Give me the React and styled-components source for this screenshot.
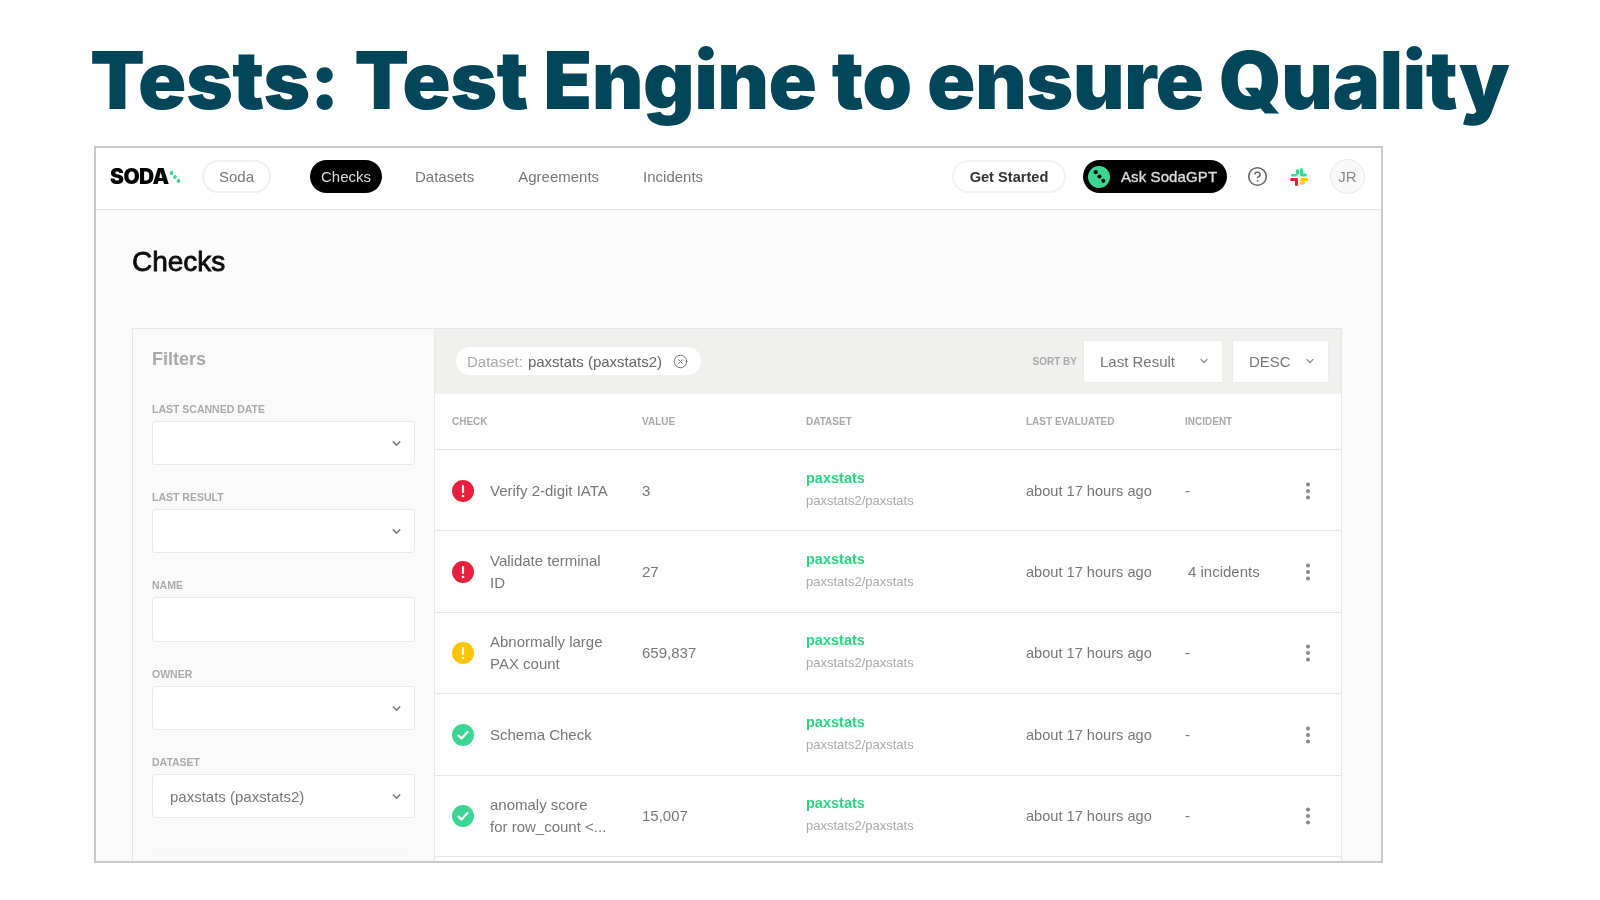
import React from "react";
import styled, { createGlobalStyle } from "styled-components";
import { ChevronDown, CircleHelp, CircleX, EllipsisVertical } from "lucide-react";

const rows = [
  { status: "fail", name: "Verify 2-digit IATA", value: "3", incident: "-" },
  { status: "fail", name: "Validate terminal ID", value: "27", incident: "4 incidents" },
  { status: "warn", name: "Abnormally large PAX count", value: "659,837", incident: "-" },
  { status: "pass", name: "Schema Check", value: "", incident: "-" },
  { status: "pass", name: "anomaly score for row_count <...", value: "15,007", incident: "-" },
];

const statusColors = { fail: "#e8203e", warn: "#fdc500", pass: "#3cd692" };

function StatusIcon({ status }) {
  return (
    <svg width="22" height="22" viewBox="0 0 22 22">
      <circle cx="11" cy="11" r="11" fill={statusColors[status]} />
      {status === "pass" ? (
        <path d="M6.5 11.5l3 3 6-6.5" fill="none" stroke="#fff" strokeWidth="2.2" strokeLinecap="round" strokeLinejoin="round" />
      ) : (
        <>
          <rect x="9.9" y="5" width="2.2" height="8" rx="1" fill="#fff" />
          <circle cx="11" cy="16" r="1.3" fill="#fff" />
        </>
      )}
    </svg>
  );
}

function SlackLogo() {
  return (
    <svg width="20" height="20" viewBox="0 0 20 20">
      <rect x="7" y="2" width="3" height="6" rx="1.5" fill="#3cd692" />
      <rect x="2" y="7" width="6" height="2.6" rx="1.3" fill="#3cd692" />
      <rect x="11" y="1" width="3" height="8" rx="1.5" fill="#3cd692" />
      <rect x="11" y="6.5" width="7" height="3" rx="1.5" fill="#3cd692" />
      <rect x="1" y="11" width="8" height="3" rx="1.5" fill="#e8203e" />
      <rect x="6" y="11" width="3" height="8" rx="1.5" fill="#e8203e" />
      <rect x="11" y="11" width="8" height="3" rx="1.5" fill="#fdc500" />
      <rect x="11" y="14.5" width="5" height="3" rx="1.5" fill="#fdc500" />
    </svg>
  );
}

function SodaDots({ size = 12, color = "#3cd692" }) {
  return (
    <svg width={size} height={size} viewBox="0 0 12 12">
      <circle cx="2.5" cy="2" r="1.9" fill={color} />
      <circle cx="6" cy="6" r="1.9" fill={color} />
      <circle cx="9.5" cy="10" r="1.9" fill={color} />
    </svg>
  );
}

function SelectField({ label, value }) {
  return (
    <Field>
      <FieldLabel>{label}</FieldLabel>
      <SelectBox>
        <span>{value}</span>
        <ChevronDown size={13} strokeWidth={2.8} color="#808080" />
      </SelectBox>
    </Field>
  );
}

export default function App() {
  return (
    <>
      <GlobalStyle />
      <Slide>
        <Title>Tests: Test Engine to ensure Quality</Title>
        <Frame>
          <Nav>
            <Logo>
              SODA
              <SodaDots />
            </Logo>
            <OutlinePill>Soda</OutlinePill>
            <NavLinks>
              <ActiveLink>Checks</ActiveLink>
              <NavLink>Datasets</NavLink>
              <NavLink>Agreements</NavLink>
              <NavLink>Incidents</NavLink>
            </NavLinks>
            <NavRight>
              <StartedPill>Get Started</StartedPill>
              <AskPill>
                <AskDot>
                  <SodaDots size={13} color="#000" />
                </AskDot>
                Ask SodaGPT
              </AskPill>
              <CircleHelp size={21} strokeWidth={1.8} color="#666" />
              <SlackSlot>
                <SlackLogo />
              </SlackSlot>
              <Avatar>JR</Avatar>
            </NavRight>
          </Nav>
          <Main>
            <Heading>Checks</Heading>
            <Panel>
              <Filters>
                <FiltersTitle>Filters</FiltersTitle>
                <SelectField label="Last scanned date" />
                <SelectField label="Last result" />
                <Field>
                  <FieldLabel>Name</FieldLabel>
                  <NameInput />
                </Field>
                <SelectField label="Owner" />
                <SelectField label="Dataset" value="paxstats (paxstats2)" />
                <FadedField />
              </Filters>
              <Results>
                <Toolbar>
                  <Chip>
                    <ChipKey>Dataset:</ChipKey>
                    <span>paxstats (paxstats2)</span>
                    <CircleX size={15} strokeWidth={1.6} color="#777" />
                  </Chip>
                  <SortGroup>
                    <SortLabel>SORT BY</SortLabel>
                    <SortSelect $width={140}>
                      Last Result
                      <ChevronDown size={12} strokeWidth={2.4} color="#8d8d8d" />
                    </SortSelect>
                    <SortSelect $width={97}>
                      DESC
                      <ChevronDown size={12} strokeWidth={2.4} color="#8d8d8d" />
                    </SortSelect>
                  </SortGroup>
                </Toolbar>
                <TableHead>
                  <HeadCell>Check</HeadCell>
                  <HeadCell>Value</HeadCell>
                  <HeadCell>Dataset</HeadCell>
                  <HeadCell>Last evaluated</HeadCell>
                  <HeadCell>Incident</HeadCell>
                </TableHead>
                {rows.map((row) => (
                  <Row key={row.name}>
                    <CheckCell>
                      <StatusIcon status={row.status} />
                      <CheckName>{row.name}</CheckName>
                    </CheckCell>
                    <span>{row.value}</span>
                    <DatasetCell>
                      <DatasetName>paxstats</DatasetName>
                      <DatasetPath>paxstats2/paxstats</DatasetPath>
                    </DatasetCell>
                    <EvaluatedCell>about 17 hours ago</EvaluatedCell>
                    <IncidentCell $dash={row.incident === "-"}>{row.incident}</IncidentCell>
                    <EllipsisVertical size={22} strokeWidth={2.4} color="#888" />
                  </Row>
                ))}
              </Results>
            </Panel>
          </Main>
        </Frame>
      </Slide>
    </>
  );
}

const GlobalStyle = createGlobalStyle`
  body {
    margin: 0;
    background: #fff;
    font-family: "Liberation Sans", Arial, sans-serif;
  }
`;

const Slide = styled.div`
  width: 1600px;
  height: 900px;
  overflow: hidden;
  display: flex;
  flex-direction: column;
`;

const Title = styled.h1`
  height: 146px;
  margin: 0;
  padding: 30px 0 0 90px;
  box-sizing: border-box;
  font-family: Inter, sans-serif;
  font-size: 80px;
  font-weight: 900;
  letter-spacing: -0.62px;
  line-height: 100px;
  white-space: nowrap;
  color: #03465a;
`;

const Frame = styled.div`
  width: 1289px;
  height: 717px;
  margin-left: 94px;
  box-sizing: border-box;
  border: 2px solid #c9c9c9;
  overflow: hidden;
  display: flex;
  flex-direction: column;
  background: #fafafa;
  filter: blur(0.45px);
`;

const Nav = styled.nav`
  height: 62px;
  flex: none;
  box-sizing: border-box;
  padding: 0 16px 4px 14px;
  display: flex;
  align-items: center;
  background: #fff;
  border-bottom: 1px solid #e4e4e4;
  font-size: 15px;
  color: #777;
`;

const Logo = styled.div`
  width: 92px;
  display: flex;
  align-items: center;
  font-family: Inter, sans-serif;
  font-size: 21px;
  font-weight: 900;
  letter-spacing: -0.6px;
  color: #000;
`;

const Pill = styled.div`
  height: 33px;
  box-sizing: border-box;
  display: flex;
  align-items: center;
  justify-content: center;
  border-radius: 17px;
`;

const OutlinePill = styled(Pill)`
  width: 69px;
  border: 2px solid #f0f0f0;
`;

const NavLinks = styled.div`
  margin-left: 39px;
  display: flex;
  align-items: center;
  gap: 44px;
`;

const ActiveLink = styled(Pill)`
  width: 72px;
  margin-right: -11px;
  background: #000;
  color: #ddd;
`;

const NavLink = styled.span`
  color: #777;
`;

const NavRight = styled.div`
  margin-left: auto;
  display: flex;
  align-items: center;
`;

const StartedPill = styled(Pill)`
  width: 114px;
  border: 2px solid #f2f2f2;
  color: #333;
  font-size: 14.6px;
  font-weight: 700;
`;

const AskPill = styled(Pill)`
  width: 144px;
  margin: 0 20px 0 17px;
  padding-left: 5px;
  justify-content: flex-start;
  gap: 11px;
  background: #000;
  color: #ddd;
  letter-spacing: 0.1px;
  -webkit-text-stroke: 0.35px #ddd;
`;

const AskDot = styled.div`
  width: 22px;
  height: 22px;
  border-radius: 50%;
  background: #3cd692;
  display: flex;
  align-items: center;
  justify-content: center;
`;

const SlackSlot = styled.div`
  margin-left: 21px;
  display: flex;
`;

const Avatar = styled.div`
  width: 35px;
  height: 35px;
  margin-left: 21px;
  box-sizing: border-box;
  border: 1px solid #e8e8e8;
  border-radius: 50%;
  background: #f9f9f9;
  display: flex;
  align-items: center;
  justify-content: center;
  color: #888;
`;

const Main = styled.main`
  flex: 1;
  min-height: 0;
  padding: 0 39px 0 36px;
  display: flex;
  flex-direction: column;
`;

const Heading = styled.h2`
  height: 118px;
  flex: none;
  margin: 0;
  padding-top: 34px;
  box-sizing: border-box;
  font-size: 28px;
  font-weight: 400;
  line-height: 36px;
  color: #0b0b0b;
  -webkit-text-stroke: 0.8px #0b0b0b;
`;

const Panel = styled.section`
  flex: 1;
  min-height: 0;
  display: flex;
  border: solid #e6e6e6;
  border-width: 1px 1px 0;
`;

const Filters = styled.aside`
  width: 302px;
  flex: none;
  box-sizing: border-box;
  padding: 0 19px;
  border-right: 1px solid #e6e6e6;
  display: flex;
  flex-direction: column;
`;

const FiltersTitle = styled.h3`
  height: 72px;
  margin: 0;
  padding-top: 20px;
  box-sizing: border-box;
  font-size: 18px;
  font-weight: 700;
  line-height: 20px;
  color: #a9a9a9;
`;

const Field = styled.div`
  margin-bottom: 24px;
`;

const FieldLabel = styled.label`
  display: block;
  height: 20px;
  font-size: 10.5px;
  font-weight: 700;
  line-height: 16px;
  text-transform: uppercase;
  color: #aaa;
`;

const SelectBox = styled.div`
  height: 44px;
  box-sizing: border-box;
  padding: 0 11px 0 17px;
  display: flex;
  align-items: center;
  justify-content: space-between;
  background: #fff;
  border: 1px solid #e8e8e8;
  border-radius: 3px;
  font-size: 15px;
  color: #777;
`;

const NameInput = styled.div`
  height: 45px;
  box-sizing: border-box;
  background: #fff;
  border: 1px solid #e8e8e8;
  border-radius: 3px;
`;

const FadedField = styled.div`
  flex: 1;
  margin-right: 5px;
  background: linear-gradient(#fbfbfb, #f8f8f7);
`;

const Results = styled.div`
  flex: 1;
  min-width: 0;
  display: flex;
  flex-direction: column;
  background: #fff;
  font-size: 15px;
  color: #777;
`;

const Toolbar = styled.div`
  height: 65px;
  flex: none;
  box-sizing: border-box;
  padding: 0 12px 1px 21px;
  display: flex;
  align-items: center;
  justify-content: space-between;
  background: #f0f0ee;
`;

const Chip = styled.div`
  height: 28px;
  width: 245px;
  box-sizing: border-box;
  padding-left: 11px;
  display: flex;
  align-items: center;
  gap: 5px;
  border-radius: 14px;
  background: #fff;
  font-size: 15px;
  color: #666;

  svg {
    margin-left: 6px;
  }
`;

const ChipKey = styled.span`
  color: #aaa;
`;

const SortGroup = styled.div`
  display: flex;
  align-items: center;
  gap: 9px;
`;

const SortLabel = styled.span`
  margin-right: -3px;
  font-size: 10px;
  font-weight: 700;
  color: #aaa;
`;

const SortSelect = styled.div`
  width: ${(p) => p.$width}px;
  height: 43px;
  box-sizing: border-box;
  padding: 0 12px 0 16px;
  display: flex;
  align-items: center;
  justify-content: space-between;
  background: #fff;
  border: 1px solid #ececec;
  border-radius: 2px;
  font-size: 15px;
  color: #777;
`;

const columns = "190px 164px 220px 159px 1fr 36px";

const TableHead = styled.div`
  height: 56px;
  flex: none;
  box-sizing: border-box;
  padding: 0 8px 0 17px;
  display: grid;
  grid-template-columns: ${columns};
  align-items: center;
  border-bottom: 1px solid #e6e6e6;
`;

const HeadCell = styled.span`
  font-size: 10px;
  font-weight: 700;
  text-transform: uppercase;
  color: #aaa;
`;

const Row = styled.div`
  height: 81.4px;
  flex: none;
  box-sizing: border-box;
  padding: 1px 8px 0 17px;
  display: grid;
  grid-template-columns: ${columns};
  align-items: center;
  border-bottom: 1px solid #e8e8e8;
  line-height: 22px;
`;

const CheckCell = styled.div`
  display: flex;
  align-items: center;
  gap: 16px;
`;

const CheckName = styled.span`
  width: 118.5px;
`;

const DatasetCell = styled.div`
  margin-top: -3px;
  display: flex;
  flex-direction: column;
  gap: 1px;
`;

const DatasetName = styled.span`
  font-size: 14.5px;
  font-weight: 700;
  color: #2ed283;
`;

const DatasetPath = styled.span`
  font-size: 13px;
  color: #aaa;
`;

const EvaluatedCell = styled.span`
  font-size: 14.6px;
`;

const IncidentCell = styled.span`
  padding-left: ${(p) => (p.$dash ? 0 : 3)}px;
`;
